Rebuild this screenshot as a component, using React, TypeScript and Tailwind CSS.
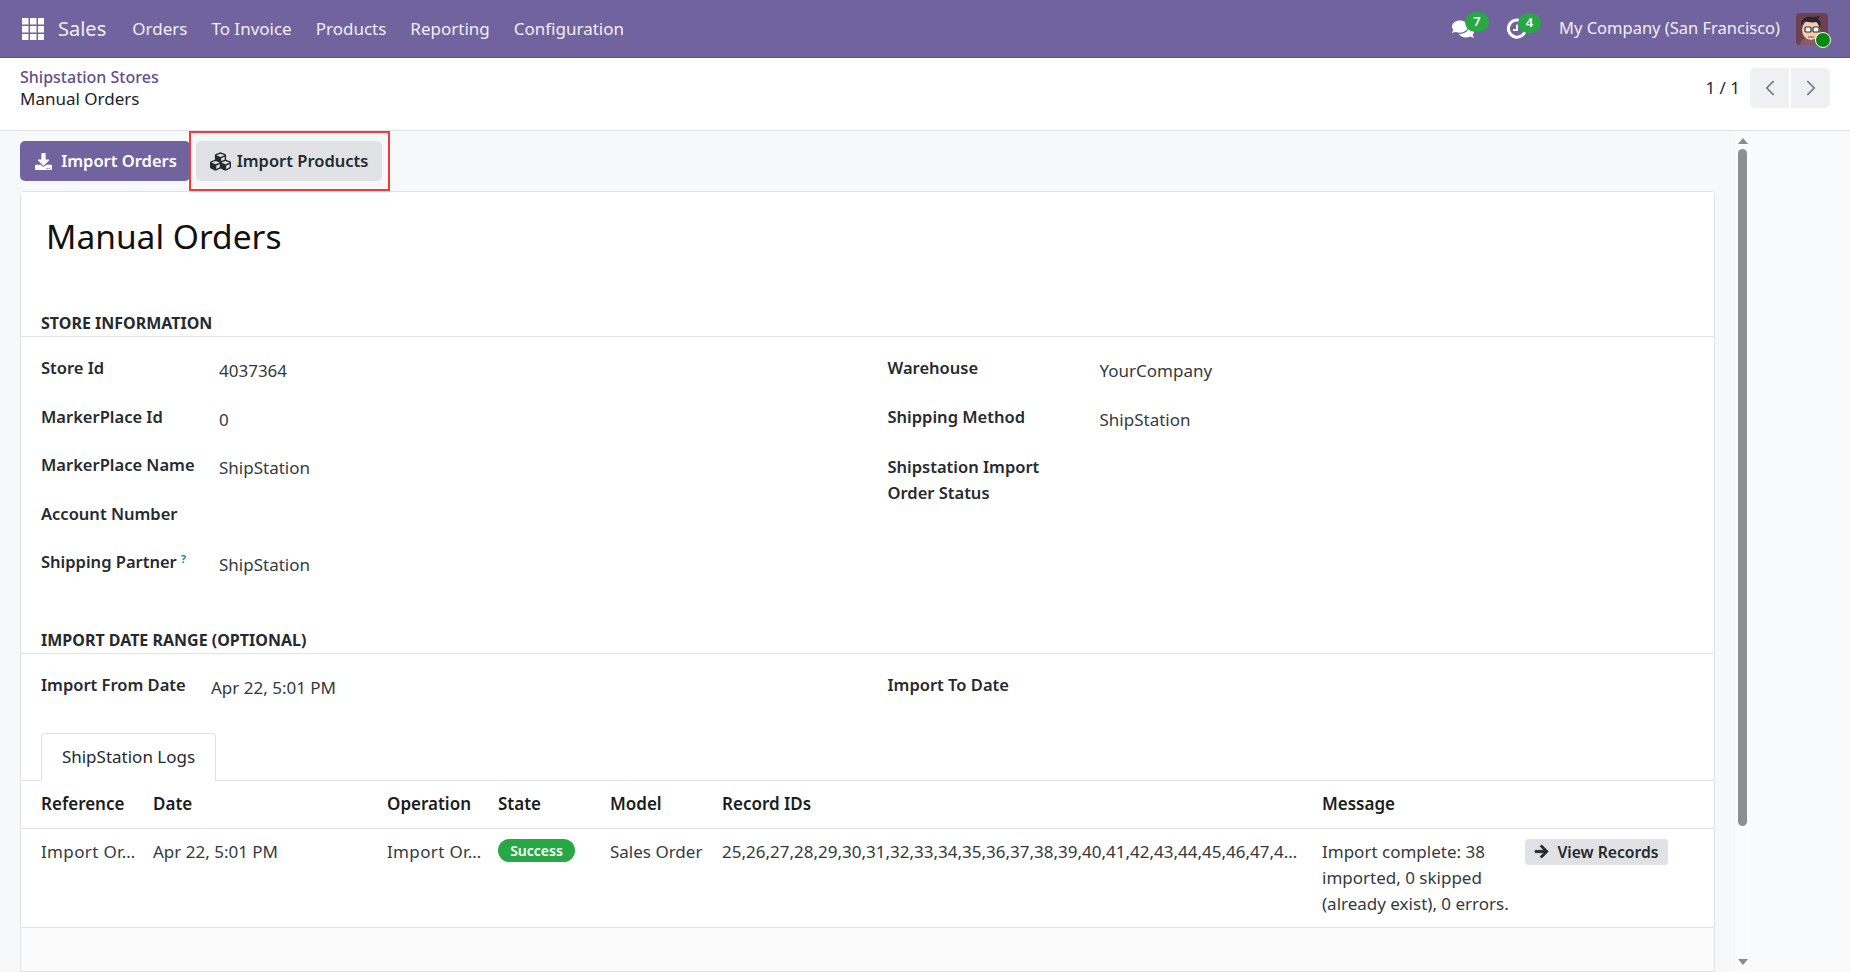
import { FaArrowRight, FaComments, FaCubes, FaDownload } from "react-icons/fa";
import { ChevronLeft, ChevronRight } from "lucide-react";

const navItems = ["Orders", "To Invoice", "Products", "Reporting", "Configuration"];

const AppsIcon = () => (
	<svg width="22" height="22" viewBox="0 0 22 22" fill="#fff">
		{[0, 8, 16].map((y) =>
			[0, 8, 16].map((x) => <rect key={`${x}-${y}`} x={x} y={y} width="6.5" height="6.5" />)
		)}
	</svg>
);

const ActivityIcon = () => (
	<svg width="22" height="22" viewBox="0 0 22 22" fill="none" stroke="#fff">
		<path d="M15.5 3.2A8.6 8.6 0 1 0 19.6 11" strokeWidth="3" />
		<path d="M11 6.5V12H7" strokeWidth="1.8" />
	</svg>
);

const Avatar = () => (
	<svg width="32" height="32" viewBox="0 0 32 32" className="rounded-[4px]">
		<rect width="32" height="32" fill="#6d4150" />
		<path d="M4 32c1-6 6-8 12-8s11 2 12 8z" fill="#8a5a68" />
		<ellipse cx="15" cy="17" rx="9" ry="10" fill="#f3cdb0" />
		<path d="M5 13C4 5 12 2 17 4l7-1-2 3c3 2 3 6 2 9l-3-6c-5 1-10 0-13-1z" fill="#26282c" />
		<rect x="9" y="14" width="6" height="5" rx="1" fill="#fff" stroke="#2a2a2a" strokeWidth="1.2" />
		<rect x="17" y="14" width="6" height="5" rx="1" fill="#fff" stroke="#2a2a2a" strokeWidth="1.2" />
		<path d="M12 24h6" stroke="#8c4a3c" strokeWidth="1.2" />
	</svg>
);

const Field = ({ label, value, help }: { label: string; value?: string; help?: boolean }) => (
	<>
		<div className="text-[16.5px] font-semibold leading-[22px] text-[#262a2e]">
			{label}
			{help && <sup className="ml-1 text-[11px] font-bold text-[#0e8fb0]">?</sup>}
		</div>
		<div className="pt-[3px] leading-[22px] text-[#343a40]">{value}</div>
	</>
);

const SectionTitle = ({ children }: { children: string }) => (
	<div className="border-b border-[#e2e4e8] px-[20px] pb-[2px] text-[16px] font-bold leading-[22px] text-[#262a2e]">
		{children}
	</div>
);

export default function App() {
	return (
		<div
			className="flex h-[972px] w-[1850px] flex-col overflow-hidden bg-white text-[17px] text-[#343a40]"
			style={{ fontFamily: '"Noto Sans", sans-serif' }}
		>
			{/* Navbar */}
			<header className="flex h-[58px] shrink-0 items-center border-b border-[#5f5080] bg-[#71639e] px-[22px] text-white">
				<AppsIcon />
				<span className="ml-[14px] text-[20px] opacity-90">Sales</span>
				<nav className="ml-[26px] flex gap-[24px] opacity-90">
					{navItems.map((item) => (
						<span key={item}>{item}</span>
					))}
				</nav>
				<div className="ml-auto flex items-center">
					<div className="relative mr-[32px]">
						<FaComments className="h-[22px] w-[22px]" />
						<span className="absolute -right-[15px] -top-[6px] flex h-[20px] w-[24px] items-center justify-center rounded-full bg-[#28a745] text-[13px] font-semibold">
							7
						</span>
					</div>
					<div className="relative mr-[31px] h-[22px]">
						<ActivityIcon />
						<span className="absolute -right-[13px] -top-[5px] flex h-[20px] w-[23px] items-center justify-center rounded-full bg-[#28a745] text-[13px] font-semibold">
							4
						</span>
					</div>
					<span className="mr-[16px] text-[16.5px] opacity-90">My Company (San Francisco)</span>
					<div className="relative">
						<Avatar />
						<span className="absolute -bottom-[3px] -right-[3px] h-[16px] w-[16px] rounded-full border-[1.5px] border-white bg-[#008a0e]" />
					</div>
				</div>
			</header>

			{/* Control panel */}
			<div className="flex h-[73px] shrink-0 items-center justify-between border-b border-[#dee2e6] px-[20px] pb-[12px]">
				<div className="leading-[21px]">
					<div className="text-[16px] font-medium text-[#5f4f8c]">Shipstation Stores</div>
					<div className="text-[#1f2327]">Manual Orders</div>
				</div>
				<div className="flex items-center">
					<span className="mr-[10px] text-[#262a2e]">1 / 1</span>
					<div className="flex gap-[2px]">
						<button className="flex h-[40px] w-[39px] items-center justify-center rounded-l-[5px] bg-[#eff0f2] text-[#6c7178]">
							<ChevronLeft size={26} strokeWidth={1.5} />
						</button>
						<button className="flex h-[40px] w-[39px] items-center justify-center rounded-r-[5px] bg-[#eff0f2] text-[#6c7178]">
							<ChevronRight size={26} strokeWidth={1.5} />
						</button>
					</div>
				</div>
			</div>

			{/* Main */}
			<div className="flex min-h-0 flex-1 bg-[#f9fafb]">
				<div className="flex w-[1735px] flex-col overflow-hidden bg-[#f7f8fa] px-[20px]">
					<div className="relative flex h-[60px] shrink-0 items-center gap-[6px]">
						<button className="flex h-[40px] w-[170px] items-center justify-center gap-[9px] rounded-[5px] bg-[#71639e] pl-[2px] text-[16.5px] font-semibold text-white">
							<FaDownload className="h-[17px] w-[17px]" />
							Import Orders
						</button>
						<button className="flex h-[40px] w-[186px] items-center justify-center gap-[6px] rounded-[5px] bg-[#e0e2e6] text-[16.5px] font-semibold text-[#262a2e]">
							<FaCubes className="h-[21px] w-[21px]" />
							Import Products
						</button>
						<div className="absolute left-[169px] top-0 h-[60px] w-[201px] border-2 border-[#f03a3e]" />
					</div>

					<div className="flex-1 rounded-t-[4px] border border-[#e0e2e6] bg-[#fbfbfb]">
						<div className="bg-white">
							<h1 className="px-[25px] pt-[21px] text-[33.5px] leading-[46px] text-[#111]">Manual Orders</h1>

							<div className="mt-[53px]">
								<SectionTitle>STORE INFORMATION</SectionTitle>
							</div>
							<div className="grid grid-cols-2 px-[20px] pt-[20px]">
								<div className="grid grid-cols-[178px_1fr] auto-rows-[48.5px]">
									<Field label="Store Id" value="4037364" />
									<Field label="MarkerPlace Id" value="0" />
									<Field label="MarkerPlace Name" value="ShipStation" />
									<Field label="Account Number" />
									<Field label="Shipping Partner" value="ShipStation" help />
								</div>
								<div className="ml-[20px] grid grid-cols-[212px_1fr] auto-rows-[48.5px]">
									<Field label="Warehouse" value="YourCompany" />
									<Field label="Shipping Method" value="ShipStation" />
									<div className="w-[170px] text-[16.5px] font-semibold leading-[26px] text-[#262a2e]">
										Shipstation Import Order Status
									</div>
								</div>
							</div>

							<div className="mt-[29px]">
								<SectionTitle>IMPORT DATE RANGE (OPTIONAL)</SectionTitle>
							</div>
							<div className="grid grid-cols-2 px-[20px] pt-[20px]">
								<div className="grid grid-cols-[170px_1fr]">
									<Field label="Import From Date" value="Apr 22, 5:01 PM" />
								</div>
								<div className="ml-[20px] text-[16.5px] font-semibold leading-[22px] text-[#262a2e]">
									Import To Date
								</div>
							</div>

							{/* Tabs */}
							<div className="mt-[34px] flex h-[48px] items-end border-b border-[#dee2e6] px-[20px]">
								<div className="-mb-px flex h-[48px] w-[175px] items-center justify-center rounded-t-[4px] border border-b-white border-[#dee2e6] bg-white text-[#262a2e]">
									ShipStation Logs
								</div>
							</div>

							{/* Logs table */}
							<div className="flex h-[48px] items-center border-b border-[#dee2e6] font-semibold text-[#1a1d20]">
								<div className="w-[132px] pl-[20px]">Reference</div>
								<div className="w-[234px]">Date</div>
								<div className="w-[111px]">Operation</div>
								<div className="w-[112px]">State</div>
								<div className="w-[112px]">Model</div>
								<div className="w-[600px]">Record IDs</div>
								<div>Message</div>
							</div>
							<div className="flex h-[99px] border-b border-[#dee2e6] pt-[10px] leading-[26px]">
								<div className="w-[132px] pl-[20px] tracking-[0.35px]">Import Or…</div>
								<div className="w-[234px]">Apr 22, 5:01 PM</div>
								<div className="w-[111px] tracking-[0.35px]">Import Or…</div>
								<div className="-mt-[2px] w-[112px]">
									<span className="inline-flex h-[23px] w-[77px] items-center justify-center rounded-full bg-[#28a745] text-[14px] font-semibold text-white">
										Success
									</span>
								</div>
								<div className="w-[112px]">Sales Order</div>
								<div className="w-[600px] truncate pr-[19px]">
									25,26,27,28,29,30,31,32,33,34,35,36,37,38,39,40,41,42,43,44,45,46,47,48,49,50,51,52
								</div>
								<div className="w-[203px]">Import complete: 38 imported, 0 skipped (already exist), 0 errors.</div>
								<button className="flex h-[26px] w-[143px] items-center justify-center gap-[8px] rounded-[4px] bg-[#e0e2e6] text-[15.7px] font-semibold text-[#262a2e]">
									<FaArrowRight className="h-[15px] w-[15px]" stroke="currentColor" strokeWidth={24} />
									View Records
								</button>
							</div>
						</div>
					</div>
				</div>

				{/* Scrollbar */}
				<div className="flex w-[15px] flex-col items-center bg-[#fbfbfc]">
					<div className="mt-[7px] h-0 w-0 border-x-[5px] border-b-[6px] border-x-transparent border-b-[#8a8a8a]" />
					<div className="mt-[5px] h-[677px] w-[9px] rounded-full bg-[#8f8f8f]" />
					<div className="mt-[133px] h-0 w-0 border-x-[5px] border-t-[6px] border-x-transparent border-t-[#8a8a8a]" />
				</div>
			</div>
		</div>
	);
}
